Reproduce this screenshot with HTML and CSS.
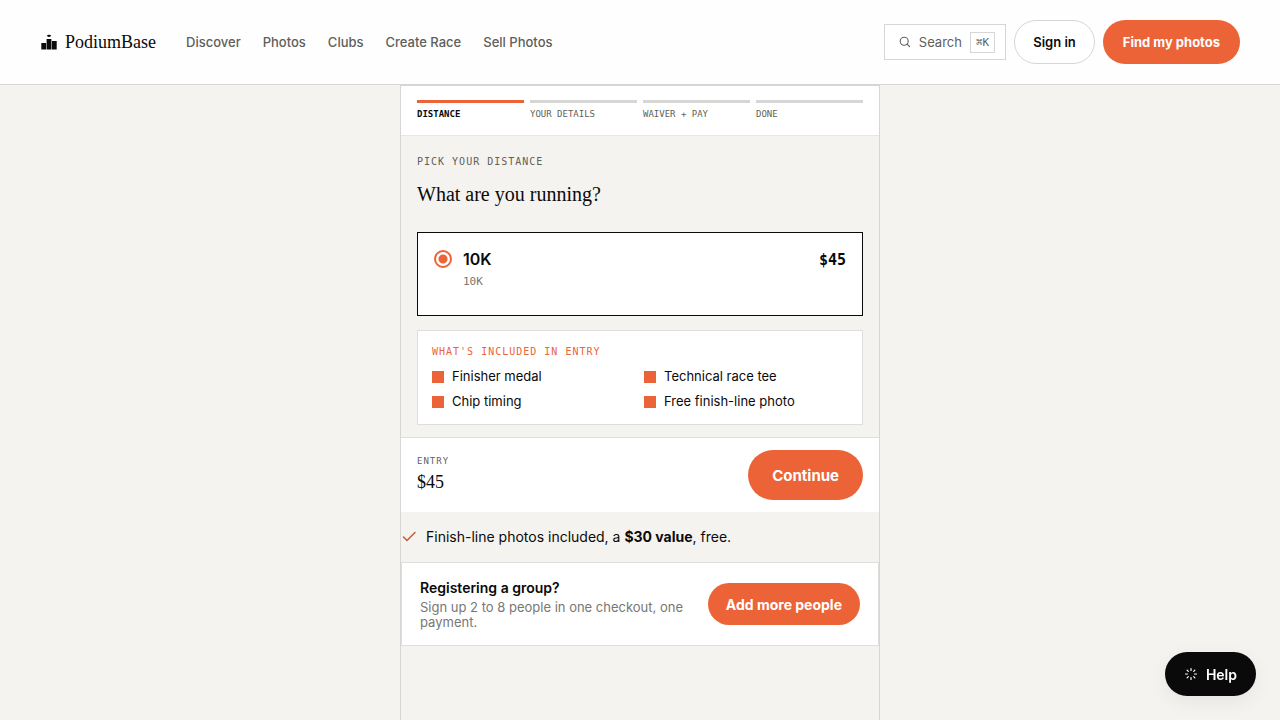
FILE: index.html
```html
<!DOCTYPE html>
<html lang="en">
<head>
  <meta charset="UTF-8" />
  <meta name="viewport" content="width=device-width, initial-scale=1.0" />
  <title>Register - PodiumBase</title>
  <link rel="stylesheet" href="styles.css">
</head>
<body>
  <header class="header">
    <a class="logo" href="#">
      <svg width="18" height="16" viewBox="0 0 18 16" fill="currentColor" aria-hidden="true">
        <rect x="1.3" y="9" width="4.8" height="6.5" />
        <rect x="6.6" y="5" width="4.8" height="10.5" />
        <rect x="11.9" y="7" width="4.8" height="8.5" />
        <ellipse cx="9" cy="1.8" rx="2" ry="1.1" />
      </svg>
      <span>PodiumBase</span>
    </a>
    <nav class="nav">
      <a href="#">Discover</a>
      <a href="#">Photos</a>
      <a href="#">Clubs</a>
      <a href="#">Create Race</a>
      <a href="#">Sell Photos</a>
    </nav>
    <div class="actions">
      <button class="search" type="button">
        <svg width="12" height="12" viewBox="0 0 12 12" fill="none" stroke="currentColor" stroke-width="1.1" stroke-linecap="round" aria-hidden="true">
          <circle cx="5.2" cy="5.2" r="4" />
          <path d="M8.2 8.2 L10.6 10.6" />
        </svg>
        <span>Search</span>
        <kbd>⌘K</kbd>
      </button>
      <a class="btn btn-outline" href="#">Sign in</a>
      <a class="btn btn-small" href="#">Find my photos</a>
    </div>
  </header>

  <main class="panel">
    <ol class="steps">
      <li class="step active">Distance</li>
      <li class="step">Your details</li>
      <li class="step">Waiver + Pay</li>
      <li class="step">Done</li>
    </ol>

    <form id="entryForm">
      <section class="distance">
        <div class="eyebrow">Pick your distance</div>
        <h1>What are you running?</h1>

        <label class="option">
          <input type="radio" name="distance" value="10k" checked />
          <span class="option-text">
            <span class="option-name">10K</span>
            <span class="option-sub">10K</span>
          </span>
          <span class="option-price">$45</span>
        </label>

        <div class="included">
          <h2>What's included in entry</h2>
          <ul>
            <li>Finisher medal</li>
            <li>Technical race tee</li>
            <li>Chip timing</li>
            <li>Free finish-line photo</li>
          </ul>
        </div>
      </section>

      <div class="checkout">
        <div>
          <div class="checkout-label">Entry</div>
          <div class="checkout-price">$45</div>
        </div>
        <button class="btn btn-large" type="submit">Continue</button>
      </div>
    </form>

    <p class="perk">
      <svg width="16" height="16" viewBox="0 0 16 16" fill="none" stroke="currentColor" stroke-width="1.5" stroke-linecap="round" stroke-linejoin="round" aria-hidden="true">
        <path d="M2.5 8 L6 11.5 L14 3.5" />
      </svg>
      <span>Finish-line photos included, a <strong>$30 value</strong>, free.</span>
    </p>

    <section class="group">
      <div class="group-text">
        <h2>Registering a group?</h2>
        <p>Sign up 2 to 8 people in one checkout, one payment.</p>
      </div>
      <a class="btn btn-medium" href="#">Add more people</a>
    </section>
  </main>

  <button class="help" type="button">
    <svg width="14" height="14" viewBox="0 0 14 14" fill="none" stroke="currentColor" stroke-width="1.2" stroke-linecap="round" aria-hidden="true">
      <path d="M7 1.5 V3.5 M7 10.5 V12.5 M1.5 7 H3.5 M10.5 7 H12.5 M3.1 3.1 L4.3 4.3 M9.7 9.7 L10.9 10.9 M3.1 10.9 L4.3 9.7 M9.7 4.3 L10.9 3.1" />
    </svg>
    <span>Help</span>
  </button>
</body>
</html>
```
FILE: styles.css
```css
* {
  box-sizing: border-box;
  margin: 0;
  padding: 0;
}
:root {
  --ink: #0a0a0a;
  --muted: #5f5f5b;
  --line: #d6d6d4;
  --paper: #f5f3ef;
  --orange: #ec6337;
  --serif: "Liberation Serif", serif;
  --mono: "DejaVu Sans Mono", monospace;
}
body {
  min-height: 100vh;
  display: flex;
  flex-direction: column;
  background-color: var(--paper);
  color: var(--ink);
  font-family: Inter, sans-serif;
  font-size: 13px;
}
a {
  color: inherit;
  text-decoration: none;
}
button {
  font-family: inherit;
  border: none;
  cursor: pointer;
}
ol, ul {
  list-style: none;
}

/* Header */
.header {
  display: flex;
  align-items: center;
  padding: 20px 40px;
  background-color: #fefefe;
  border-bottom: 1px solid var(--line);
}
.logo {
  display: flex;
  align-items: center;
  gap: 7px;
  margin-right: 30px;
  font-family: var(--serif);
  font-size: 18px;
}
.nav {
  display: flex;
  gap: 22px;
  color: var(--muted);
  font-weight: 500;
}
.actions {
  display: flex;
  align-items: center;
  gap: 8px;
  margin-left: auto;
}
.search {
  display: flex;
  align-items: center;
  gap: 8px;
  height: 36px;
  padding: 0 10px 0 14px;
  background-color: #fff;
  border: 1px solid var(--line);
  color: var(--muted);
  font-size: 13px;
}
.search kbd {
  padding: 3px 5px;
  border: 1px solid var(--line);
  font-family: var(--mono);
  font-size: 11px;
}

/* Buttons */
.btn {
  display: inline-flex;
  align-items: center;
  justify-content: center;
  flex-shrink: 0;
  border-radius: 999px;
  background-color: var(--orange);
  color: #fff;
  font-weight: 700;
}
.btn-small {
  height: 44px;
  padding: 0 20px;
  font-size: 13px;
}
.btn-outline {
  height: 44px;
  padding: 0 18px;
  background-color: #fff;
  border: 1px solid var(--line);
  color: var(--ink);
  font-weight: 600;
}
.btn-medium {
  height: 42px;
  padding: 0 18px;
  font-size: 14px;
}
.btn-large {
  height: 50px;
  padding: 0 24px;
  font-size: 15px;
}

/* Registration panel */
.panel {
  flex: 1;
  width: 100%;
  max-width: 480px;
  margin: 0 auto;
  border: 1px solid var(--line);
  border-bottom: none;
}
.steps {
  display: flex;
  gap: 6px;
  padding: 14px 16px;
  background-color: #fff;
  border-bottom: 1px solid #e8e7e4;
}
.step {
  flex: 1;
  padding-top: 5px;
  border-top: 3px solid var(--line);
  color: var(--muted);
  font-family: var(--mono);
  font-size: 9px;
  line-height: 13px;
  text-transform: uppercase;
}
.step.active {
  border-color: var(--orange);
  color: var(--ink);
  font-weight: bold;
}
.distance {
  padding: 18px 16px 12px;
}
.eyebrow {
  color: var(--muted);
  font-family: var(--mono);
  font-size: 10px;
  line-height: 16px;
  letter-spacing: 1px;
  text-transform: uppercase;
}
h1 {
  margin: 8px 0 22px;
  font-family: var(--serif);
  font-size: 20px;
  font-weight: normal;
  line-height: 32px;
}
.option {
  display: flex;
  align-items: flex-start;
  gap: 11px;
  min-height: 84px;
  padding: 16px;
  background-color: #fff;
  border: 1px solid var(--ink);
  cursor: pointer;
}
.option input {
  appearance: none;
  width: 18px;
  height: 18px;
  margin-top: 1px;
  border: 2px solid var(--orange);
  border-radius: 50%;
  background: radial-gradient(circle, var(--orange) 4px, #fff 5px);
}
.option-text {
  flex: 1;
  display: flex;
  flex-direction: column;
  gap: 5px;
}
.option-name {
  font-size: 16px;
  font-weight: 600;
  line-height: 20px;
}
.option-sub {
  color: #777773;
  font-family: var(--mono);
  font-size: 11px;
  line-height: 16px;
}
.option-price {
  font-family: var(--mono);
  font-size: 15px;
  font-weight: bold;
  line-height: 22px;
}
.included {
  margin-top: 14px;
  padding: 14px;
  background-color: #fff;
  border: 1px solid #dededc;
}
.included h2 {
  color: var(--orange);
  font-family: var(--mono);
  font-size: 10px;
  font-weight: normal;
  line-height: 13px;
  letter-spacing: 1px;
  text-transform: uppercase;
}
.included ul {
  display: grid;
  grid-template-columns: 1fr 1fr;
  gap: 8px;
  margin-top: 10px;
}
.included li {
  display: flex;
  align-items: center;
  gap: 8px;
  line-height: 17px;
}
.included li::before {
  content: "";
  width: 12px;
  height: 12px;
  background-color: var(--orange);
}
.checkout {
  display: flex;
  align-items: center;
  justify-content: space-between;
  padding: 12px 16px;
  background-color: #fff;
  border-top: 1px solid #dededc;
}
.checkout-label {
  color: var(--muted);
  font-family: var(--mono);
  font-size: 9px;
  line-height: 14px;
  letter-spacing: 1px;
  text-transform: uppercase;
}
.checkout-price {
  font-family: var(--serif);
  font-size: 18px;
  line-height: 28px;
}
.perk {
  display: flex;
  align-items: center;
  gap: 9px;
  padding: 14px 0;
  font-size: 14px;
  line-height: 22px;
}
.perk svg {
  color: #bd5c3c;
}
.group {
  display: flex;
  align-items: center;
  gap: 16px;
  padding: 15px 18px;
  background-color: #fff;
  border: 1px solid #dededc;
}
.group-text {
  flex: 1;
}
.group h2 {
  margin-bottom: 2px;
  font-size: 14px;
  font-weight: 600;
  line-height: 20px;
}
.group p {
  color: #777773;
  line-height: 15px;
}

/* Help bubble */
.help {
  position: fixed;
  right: 24px;
  bottom: 24px;
  display: flex;
  align-items: center;
  gap: 8px;
  height: 44px;
  padding: 0 19px;
  border-radius: 999px;
  background-color: var(--ink);
  color: #fff;
  font-size: 14px;
  font-weight: 600;
  box-shadow: 0 6px 20px rgba(0, 0, 0, 0.06);
}
```
